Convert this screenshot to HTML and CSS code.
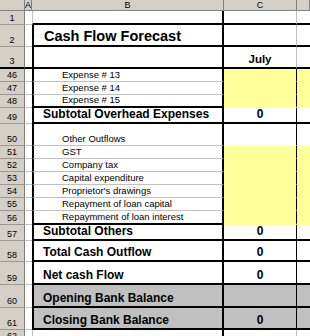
FILE: index.html
```html
<!DOCTYPE html>
<html lang="en">
<head>
    <meta charset="UTF-8">
    <meta name="viewport" content="width=device-width, initial-scale=1.0">
    <title>Cash Flow Forecast</title>
    <link rel="stylesheet" href="styles.css">
</head>
<body>
    <div class="sheet">
        <div class="row hdr">
            <div class="corner"></div>
            <div class="col">A</div>
            <div class="col">B</div>
            <div class="col">C</div>
            <div class="col"></div>
        </div>

        <div class="row h14 edge-top">
            <div class="rh">1</div><div class="a"></div><div class="b open"></div><div class="c soft"></div><div class="d"></div>
        </div>
        <div class="row h22 thick">
            <div class="rh">2</div><div class="a"></div><div class="b title">Cash Flow Forecast</div><div class="c soft"></div><div class="d"></div>
        </div>
        <div class="row h22 thick frozen">
            <div class="rh">3</div><div class="a"></div><div class="b"></div><div class="c soft strong month">July</div><div class="d"></div>
        </div>

        <div class="row h13">
            <div class="rh">46</div><div class="a"></div><div class="b item">Expense # 13</div><div class="c fill"></div><div class="d fill"></div>
        </div>
        <div class="row h13">
            <div class="rh">47</div><div class="a"></div><div class="b item">Expense # 14</div><div class="c fill"></div><div class="d fill"></div>
        </div>
        <div class="row h13 thick">
            <div class="rh">48</div><div class="a"></div><div class="b item">Expense # 15</div><div class="c fill"></div><div class="d fill"></div>
        </div>
        <div class="row h16 thick">
            <div class="rh">49</div><div class="a"></div><div class="b strong">Subtotal Overhead Expenses</div><div class="c strong">0</div><div class="d"></div>
        </div>

        <div class="row h22">
            <div class="rh">50</div><div class="a"></div><div class="b item">Other Outflows</div><div class="c blank"></div><div class="d blank"></div>
        </div>
        <div class="row h13">
            <div class="rh">51</div><div class="a"></div><div class="b item">GST</div><div class="c fill"></div><div class="d fill"></div>
        </div>
        <div class="row h13">
            <div class="rh">52</div><div class="a"></div><div class="b item">Company tax</div><div class="c fill"></div><div class="d fill"></div>
        </div>
        <div class="row h13">
            <div class="rh">53</div><div class="a"></div><div class="b item">Capital expenditure</div><div class="c fill"></div><div class="d fill"></div>
        </div>
        <div class="row h13">
            <div class="rh">54</div><div class="a"></div><div class="b item">Proprietor's drawings</div><div class="c fill"></div><div class="d fill"></div>
        </div>
        <div class="row h13">
            <div class="rh">55</div><div class="a"></div><div class="b item">Repayment of loan capital</div><div class="c fill"></div><div class="d fill"></div>
        </div>
        <div class="row h14 thick">
            <div class="rh">56</div><div class="a"></div><div class="b item">Repaymment of loan interest</div><div class="c fill"></div><div class="d fill"></div>
        </div>

        <div class="row h16 thick">
            <div class="rh">57</div><div class="a"></div><div class="b strong">Subtotal Others</div><div class="c strong">0</div><div class="d"></div>
        </div>
        <div class="row h21 thick">
            <div class="rh">58</div><div class="a"></div><div class="b strong">Total Cash Outflow</div><div class="c strong">0</div><div class="d"></div>
        </div>
        <div class="row h23 thick">
            <div class="rh">59</div><div class="a"></div><div class="b strong">Net cash Flow</div><div class="c strong">0</div><div class="d"></div>
        </div>
        <div class="row h23 thick">
            <div class="rh">60</div><div class="a"></div><div class="b strong shade">Opening Bank Balance</div><div class="c shade"></div><div class="d shade"></div>
        </div>
        <div class="row h22 thick">
            <div class="rh">61</div><div class="a"></div><div class="b strong shade">Closing Bank Balance</div><div class="c strong shade">0</div><div class="d shade"></div>
        </div>

        <div class="row h13">
            <div class="rh">62</div><div class="a"></div><div class="b open"></div><div class="c soft"></div><div class="d"></div>
        </div>
    </div>
</body>
</html>
```

FILE: styles.css
```css
body {
    margin: 0;
    background-color: #fff;
    font-family: "Liberation Sans", Arial, sans-serif;
    color: #000;
    overflow: hidden;
}

.sheet {
    width: 310px;
}

.row {
    display: grid;
    grid-template-columns: 25px 7px 192px 73px 1fr;
}

.row > div {
    box-sizing: border-box;
    display: flex;
    align-items: flex-end;
    overflow: hidden;
    white-space: nowrap;
    line-height: 1.15;
    border-bottom: 1px solid #c0c0c0;
}

.h13 { height: 13px; }
.h14 { height: 14px; }
.h16 { height: 16px; }
.h21 { height: 21px; }
.h22 { height: 22px; }
.h23 { height: 23px; }

/* column letters */
.hdr {
    height: 11px;
}

.hdr > div {
    background-color: #d4d0c8;
    border-right: 1px solid #808080;
    border-bottom: 1px solid #808080;
    justify-content: center;
    font-size: 9px;
}

/* row numbers */
.row > .rh {
    background-color: #d4d0c8;
    border-right: 1px solid #808080;
    border-bottom: 1px solid #9c988f;
    justify-content: center;
    font-size: 9px;
    padding-bottom: 1px;
}

.b {
    border-left: 2px solid #000;
    border-right: 2px solid #000;
    padding-left: 9px;
}

.b.open {
    border-left: 1px solid #c0c0c0;
}

.c {
    border-right: 1px solid #000;
    justify-content: center;
}

.c.soft {
    border-right-color: #c0c0c0;
}

/* table edges */
.edge-top > .b,
.edge-top > .c,
.edge-top > .d,
.thick > .b,
.thick > .c,
.thick > .d {
    border-bottom: 2px solid #000;
}

.frozen > .rh,
.frozen > .a {
    border-bottom: 2px solid #000;
}

.row > .fill {
    background-color: #ffff99;
    border-bottom-color: #ffff99;
}

.row > .blank {
    border-bottom-color: #fff;
}

.shade {
    background-color: #c0c0c0;
}

.title {
    font-size: 14.5px;
    font-weight: bold;
    line-height: 1;
    padding-left: 10px;
}

.strong {
    font-size: 12px;
    font-weight: bold;
}

.month {
    font-size: 11.5px;
    padding-bottom: 1px;
}

.item {
    font-size: 9.5px;
    padding-left: 28px;
}
```
